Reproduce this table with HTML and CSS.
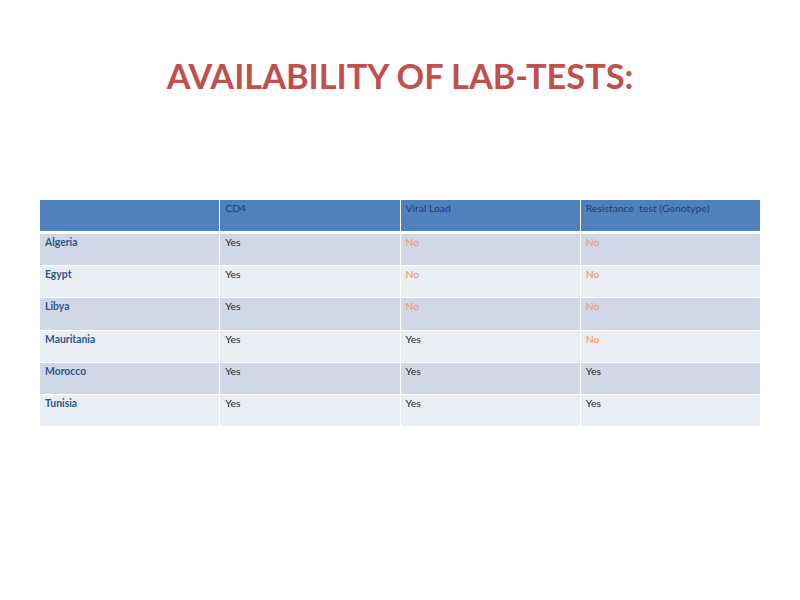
FILE: index.html
```html
<!DOCTYPE html>
<html>
<head>
<meta charset="utf-8">
<link rel="stylesheet" href="styles.css">
</head>
<body>
<div class="slide">
  <h1 class="title">AVAILABILITY OF LAB-TESTS:</h1>
  <div class="grid">
    <div class="row head">
      <div class="cell"></div><div class="cell">CD4</div><div class="cell">Viral Load</div><div class="cell">Resistance&nbsp; test (Genotype)</div>
    </div>
    <div class="row odd"><div class="cell country">Algeria</div><div class="cell">Yes</div><div class="cell no">No</div><div class="cell no">No</div></div>
    <div class="row even"><div class="cell country">Egypt</div><div class="cell">Yes</div><div class="cell no">No</div><div class="cell no">No</div></div>
    <div class="row odd"><div class="cell country">Libya</div><div class="cell">Yes</div><div class="cell no">No</div><div class="cell no">No</div></div>
    <div class="row even"><div class="cell country">Mauritania</div><div class="cell">Yes</div><div class="cell">Yes</div><div class="cell no">No</div></div>
    <div class="row odd"><div class="cell country">Morocco</div><div class="cell">Yes</div><div class="cell">Yes</div><div class="cell">Yes</div></div>
    <div class="row even"><div class="cell country">Tunisia</div><div class="cell">Yes</div><div class="cell">Yes</div><div class="cell">Yes</div></div>
  </div>
</div>
</body>
</html>
```
FILE: styles.css
```css
html, body {
  margin: 0;
  padding: 0;
  background: #ffffff;
}
.slide {
  width: 800px;
  height: 600px;
  font-family: Lato, "Open Sans", sans-serif;
  padding-top: 54px;
  box-sizing: border-box;
}
.title {
  margin: 0;
  text-align: center;
  font-size: 34.3px;
  font-weight: 700;
  color: #c0504d;
  line-height: 44px;
}
.grid {
  margin: 102px 0 0 40px;
  width: 720px;
  display: flex;
  flex-direction: column;
  gap: 1px;
  font-size: 10.4px;
  line-height: 13px;
}
.row {
  display: grid;
  grid-template-columns: repeat(4, 1fr);
  column-gap: 1px;
  height: 31.2px;
}
.row.head {
  height: 31px;
  margin-bottom: 2px;
}
.cell {
  padding: 2px 5px 0;
  color: #262626;
}
.head .cell {
  background: #4f81bd;
  color: #1f3f6e;
}
.odd .cell { background: #d0d8e8; }
.even .cell { background: #e9edf4; }
.cell.country {
  color: #2f5587;
  font-weight: 700;
}
.cell.no {
  color: #f79646;
}
```
